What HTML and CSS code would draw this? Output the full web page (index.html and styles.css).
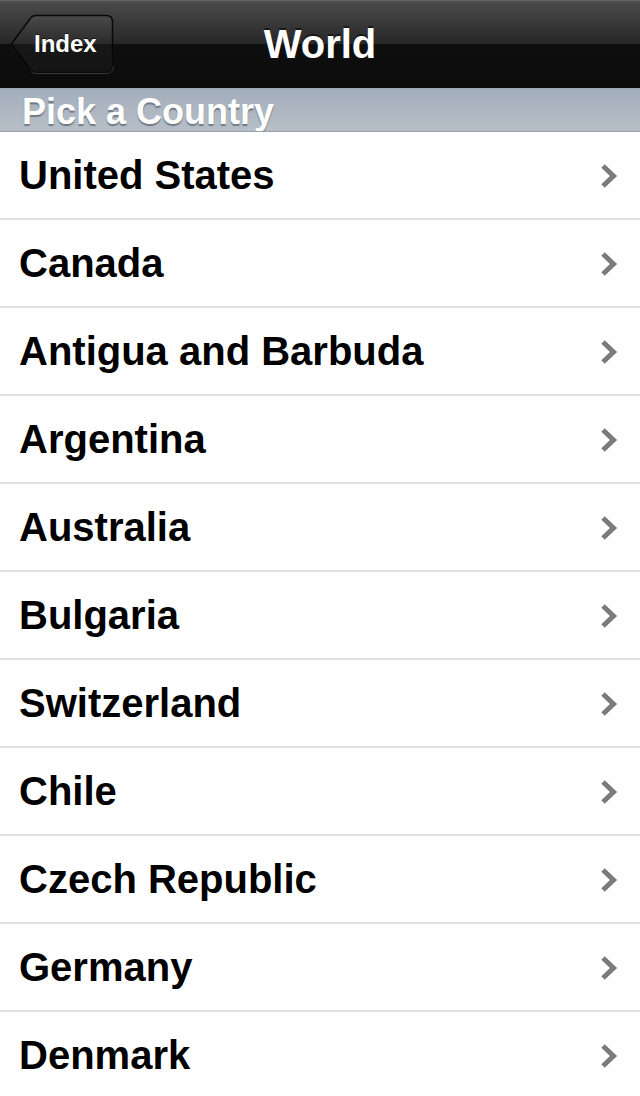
FILE: index.html
```html
<!DOCTYPE html>
<html>
<head>
  <title>World</title>
  <link rel="stylesheet" href="styles.css">
</head>
<body>
  <header class="navbar">
    <a class="btn-back" href="#">
      <svg class="btn-back-shape" width="104" height="60" viewBox="0 0 104 60">
        <defs>
          <linearGradient id="backFill" x1="0" y1="0" x2="0" y2="1">
            <stop offset="0" stop-color="#4a4a4a"/>
            <stop offset="0.5" stop-color="#2a2a2a"/>
            <stop offset="0.5" stop-color="#181818"/>
            <stop offset="1" stop-color="#141414"/>
          </linearGradient>
        </defs>
        <path d="M1.5 30 L21 3.5 Q23 1.5 26 1.5 L96 1.5 Q102.5 1.5 102.5 8 L102.5 52 Q102.5 58.5 96 58.5 L26 58.5 Q23 58.5 21 56.5 Z"
              fill="url(#backFill)" stroke="#080808" stroke-width="1.5"/>
        <path d="M21 57.5 Q23 59.5 26 59.5 L96 59.5 Q103.5 59.5 103.5 52" fill="none" stroke="#3a3a3a" stroke-width="1"/>
      </svg>
      <span class="btn-back-label">Index</span>
    </a>
    <h1 class="nav-title">World</h1>
    <span></span>
  </header>

  <div class="section-header">Pick a Country</div>

  <ul class="country-list" id="country-list"></ul>

  <script>
    var countries = ["United States", "Canada", "Antigua and Barbuda", "Argentina", "Australia",
      "Bulgaria", "Switzerland", "Chile", "Czech Republic", "Germany", "Denmark"];

    var list = document.getElementById("country-list");
    countries.forEach(function(name) {
      var row = document.createElement("li");
      row.className = "country-row";
      row.innerHTML = '<span class="country-name"></span>' +
        '<svg class="chevron" width="20" height="26" viewBox="0 0 20 26">' +
        '<polyline points="4,3 14.5,13 4,23" fill="none" stroke="#7b7b7b" stroke-width="5"/></svg>';
      row.querySelector(".country-name").textContent = name;
      list.appendChild(row);
    });
  </script>
</body>
</html>
```

FILE: styles.css
```css
body {
  font-family: "Liberation Sans", Arial, sans-serif;
  margin: 0;
  background-color: #fff;
  overflow: hidden;
}

.navbar {
  display: grid;
  grid-template-columns: 1fr auto 1fr;
  align-items: center;
  height: 88px;
  background: linear-gradient(#6a6a6a 0, #4a4a4a 2px, #272727 44px, #0f0f0f 44px, #0b0b0b 88px);
}

.btn-back {
  position: relative;
  justify-self: start;
  display: flex;
  align-items: center;
  width: 104px;
  height: 60px;
  margin-left: 10px;
  text-decoration: none;
}

.btn-back-shape {
  position: absolute;
  left: 0;
  top: 0;
}

.btn-back-label {
  position: relative;
  padding-left: 24px;
  color: #fff;
  font-size: 24px;
  font-weight: bold;
  text-shadow: 0 -1px 0 rgba(0, 0, 0, 0.6);
}

.nav-title {
  margin: 0;
  color: #fff;
  font-size: 40px;
  font-weight: bold;
  text-shadow: 0 -2px 0 rgba(0, 0, 0, 0.5);
}

.section-header {
  height: 42px;
  line-height: 45px;
  padding-left: 22px;
  border-top: 1px solid #9aa5b0;
  border-bottom: 1px solid #98a0a8;
  background: linear-gradient(#a3aebb, #b7bfc7);
  color: #fff;
  font-size: 36px;
  font-weight: bold;
  text-shadow: 0 2px 1px rgba(60, 70, 80, 0.55);
  overflow: hidden;
}

.country-list {
  list-style: none;
  margin: 0;
  padding: 0;
}

.country-row {
  display: flex;
  align-items: center;
  justify-content: space-between;
  height: 85px;
  padding: 1px 21px 0 19px;
  border-bottom: 2px solid #e0e0e0;
}

.country-name {
  color: #000;
  font-size: 40px;
  font-weight: bold;
}

.chevron {
  display: block;
}
```
